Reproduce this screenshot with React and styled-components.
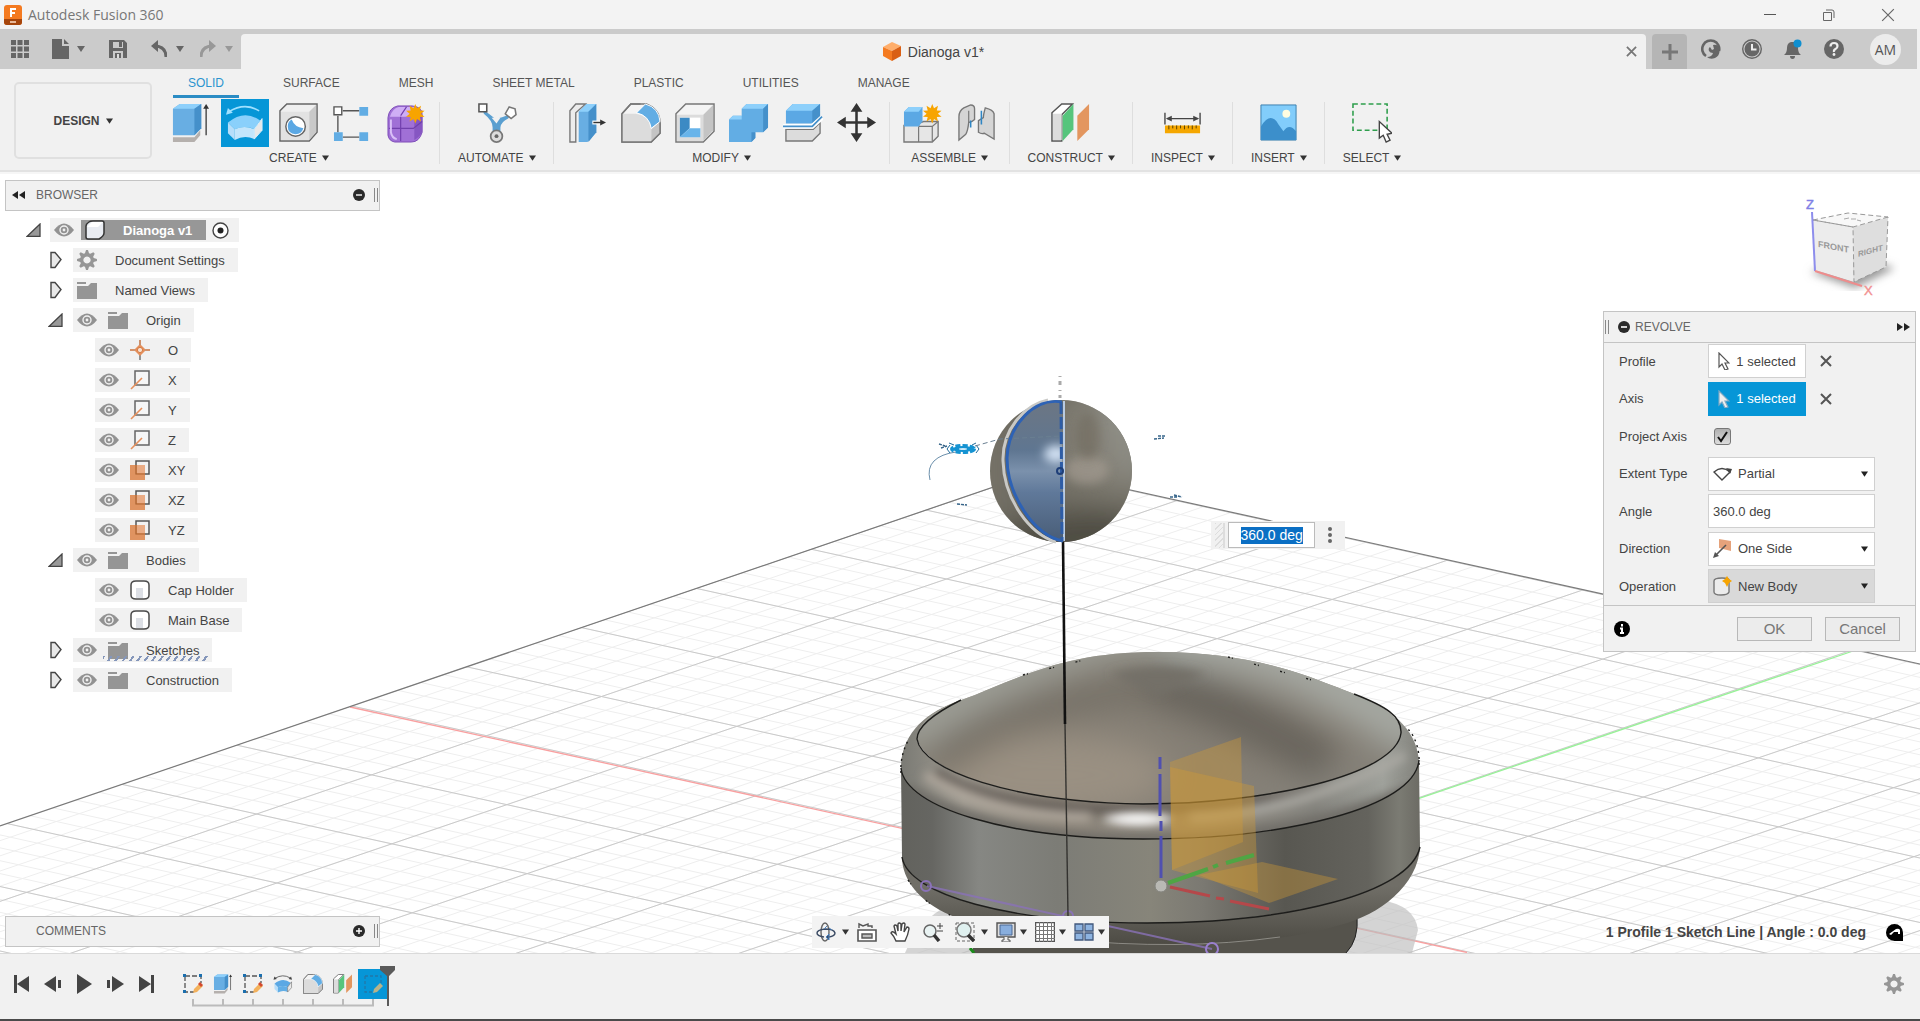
import React, { useState } from 'react';
import styled, { createGlobalStyle } from 'styled-components';

const GlobalStyle = createGlobalStyle`
  * {
    box-sizing: border-box;
  }
  body {
    margin: 0;
    background: #f1f1f1;
    color: #444;
    font-family: "Liberation Sans", Arial, sans-serif;
    font-size: 13px;
  }
  button, input, select {
    font: inherit;
    color: inherit;
  }
  svg {
    display: block;
    flex: none;
  }
`;

const Page = styled.div`
  display: flex;
  flex-direction: column;
  min-height: 100vh;
  border-bottom: 2px solid #4a4a4a;
`;

const PlainButton = styled.button`
  display: flex;
  align-items: center;
  justify-content: center;
  padding: 0;
  border: none;
  background: none;
  cursor: pointer;
`;

/* ---------- title bar ---------- */

const TitleBar = styled.header`
  display: flex;
  align-items: center;
  height: 29px;
  padding: 0 20px 0 4px;
  background: #f3f3f3;
`;

const AppTitle = styled.h1`
  margin: 0 auto 0 6px;
  font: 400 14px "Open Sans", sans-serif;
  color: #777;
`;

const WindowButton = styled(PlainButton)`
  width: 24px;
  height: 24px;
  margin-left: 35px;
`;

/* ---------- document bar ---------- */

const DocumentBar = styled.div`
  display: flex;
  height: 40px;
  margin-right: 3px;
  background: #cbcbcb;
`;

const QuickTools = styled.div`
  display: flex;
  align-items: center;
  width: 241px;
  padding-left: 11px;
`;

const QuickButton = styled(PlainButton)`
  gap: ${({ $gap }) => $gap || 0}px;
  margin-right: ${({ $after }) => $after || 0}px;
  opacity: ${({ $dim }) => ($dim ? 0.5 : 1)};
`;

const DocumentTab = styled.div`
  display: flex;
  flex: 1;
  align-items: center;
  margin-top: 5px;
  padding-right: 9px;
  border-radius: 4px 4px 0 0;
  background: #f1f1f1;
`;

const DocumentName = styled.div`
  display: flex;
  flex: 1;
  align-items: center;
  justify-content: center;
  gap: 7px;
  font-size: 14px;
`;

const AddTab = styled(PlainButton)`
  width: 35px;
  margin: 5px 14px 0 6px;
  border-radius: 4px 4px 0 0;
  background: #b5b5b5;
`;

const AccountTools = styled.div`
  display: flex;
  align-items: center;
  gap: 21px;
  padding-right: 16px;
`;

const Avatar = styled(PlainButton)`
  width: 31px;
  height: 31px;
  margin-left: 5px;
  border-radius: 50%;
  background: #ececec;
  color: #555;
  font: 400 14px "Open Sans", sans-serif;
`;

/* ---------- ribbon ---------- */

const Ribbon = styled.div`
  position: relative;
  z-index: 1;
  display: flex;
  height: 103px;
  border-bottom: 2px solid #e2e2e2;
  background: #f1f1f1;
  box-shadow: 0 2px #f6f6f6;
`;

const DesignButton = styled(PlainButton)`
  gap: 6px;
  width: 138px;
  height: 77px;
  margin: 13px 6px 0 14px;
  border: 2px solid #e0e0e0;
  border-radius: 5px;
  font-size: 12px;
  font-weight: bold;
`;

const RibbonBody = styled.div`
  flex: 1;
`;

const RibbonTabs = styled.nav`
  display: flex;
  gap: 29px;
  height: 29px;
  padding-left: 15px;
`;

const RibbonTab = styled.a`
  padding: 7px 15px 0;
  border-bottom: 3px solid ${({ $active }) => ($active ? '#2b8cc4' : 'transparent')};
  color: ${({ $active }) => ($active ? '#2b94cf' : '#555')};
  font-size: 12px;
  line-height: 14px;
  text-decoration: none;
`;

const RibbonGroups = styled.div`
  display: flex;
`;

const RibbonGroup = styled.section`
  display: flex;
  flex-direction: column;
  align-items: center;
  gap: 4px;
  padding: 0 ${({ $wide }) => ($wide ? 9 : 18)}px;
  background: linear-gradient(#dedede, #dedede) no-repeat right 4px / 1px 62px;

  &:last-child {
    background: none;
  }
`;

const ToolRow = styled.div`
  display: flex;
  gap: 6px;
  margin-top: 1px;
`;

const ToolButton = styled(PlainButton)`
  width: 48px;
  height: 48px;
  background: ${({ $active }) => ($active ? '#0696d7' : 'none')};
`;

const GroupLabel = styled(PlainButton)`
  gap: 5px;
  font-size: 12px;
  line-height: 14px;
`;

/* ---------- viewport ---------- */

const Viewport = styled.main`
  position: relative;
  display: flex;
  flex: 1;
  flex-direction: column;
  justify-content: space-between;
  overflow: hidden;
  background: #fff;
`;

const SceneSvg = styled.svg`
  position: absolute;
  inset: 0;
  width: 100%;
  height: 100%;
`;

const ViewportTop = styled.div`
  position: relative;
  display: flex;
  align-items: flex-start;
  justify-content: space-between;
  padding: 8px 4px 0 5px;
`;

const PanelHeader = styled.div`
  display: flex;
  align-items: center;
  width: ${({ $width }) => $width || 'auto'};
  height: 31px;
  padding: 0 0 1px 6px;
  border: 1px solid #c4c4c4;
  background: #f1f1f1;
`;

const PanelTitle = styled.h2`
  flex: 1;
  margin: 0 0 0 ${({ $indent }) => $indent || 0}px;
  color: #666;
  font-size: 12px;
  font-weight: normal;
`;

const Grip = styled.span`
  width: 4px;
  height: 14px;
  margin: 0 1px 0 ${({ $before }) => $before || 0}px;
  border: solid #888;
  border-width: 0 1px;
`;

const Tree = styled.ul`
  display: flex;
  flex-direction: column;
  gap: 6px;
  margin: 7px 0 0;
  padding: 0;
  list-style: none;
`;

const indents = [21, 43, 65];

const TreeItem = styled.li`
  display: flex;
  align-items: center;
  height: 24px;
  padding-left: ${({ $level }) => indents[$level]}px;
`;

const Expander = styled(PlainButton)`
  width: 15px;
  height: 18px;
  margin-right: ${({ $open }) => ($open ? 9 : 10)}px;
`;

const ExpanderSpace = styled.span`
  width: 25px;
`;

const TreeChip = styled.div`
  position: relative;
  display: flex;
  align-items: center;
  height: 24px;
  padding: 0 ${({ $root }) => ($root ? 10 : 13)}px 0 4px;
  background: #f1f1f1;
`;

const TreeIcon = styled.span`
  display: flex;
  margin-left: ${({ $first }) => ($first ? 0 : 11)}px;
`;

const TreeText = styled.span`
  padding-left: 18px;
`;

const Hatch = styled.span`
  position: absolute;
  right: 3px;
  bottom: 1px;
  left: 30px;
  height: 5px;
  background: repeating-linear-gradient(125deg, #8496ba 0 2px, transparent 2px 6px);
`;

const RootName = styled.div`
  display: flex;
  align-items: center;
  height: 20px;
  margin: 0 6px 0 7px;
  padding: 0 14px 0 4px;
  background: #979797;
  color: #fff;
  font-weight: bold;
`;

/* ---------- right side ---------- */

const RightColumn = styled.div`
  display: flex;
  flex-direction: column;
  align-items: flex-end;
  width: 313px;
`;

const CubeButton = styled(PlainButton)`
  height: 131px;
  margin-right: 16px;
`;

const Dialog = styled.form`
  width: 100%;
  border: 1px solid #c4c4c4;
  background: #f1f1f1;
`;

const DialogHeader = styled.div`
  display: flex;
  align-items: center;
  height: 31px;
  padding: 0 5px 0 1px;
  border-bottom: 1px solid #c4c4c4;
`;

const DialogRows = styled.div`
  display: flex;
  flex-direction: column;
  justify-content: space-between;
  height: 262px;
  padding: 1px 0 2px;
`;

const DialogRow = styled.div`
  display: flex;
  align-items: center;
  height: 34px;
  padding-left: 15px;
`;

const FieldLabel = styled.label`
  width: 89px;
`;

const SelectionButton = styled(PlainButton)`
  gap: 6px;
  width: 98px;
  height: 34px;
  border: 1px solid ${({ $active }) => ($active ? '#0696d7' : '#d0d0d0')};
  background: ${({ $active }) => ($active ? '#0696d7' : '#fff')};
  color: ${({ $active }) => ($active ? '#fff' : '#444')};
`;

const ClearButton = styled(PlainButton)`
  margin-left: 14px;
`;

const Field = styled.div`
  display: flex;
  align-items: center;
  width: 167px;
  height: 34px;
  padding: 0 6px 0 4px;
  border: 1px solid #d0d0d0;
  background: ${({ $grey }) => ($grey ? '#d9d9d9' : '#fff')};
`;

const FieldSelect = styled.select`
  flex: 1;
  min-width: 0;
  margin-left: 6px;
  padding: 0;
  border: none;
  appearance: none;
  background: none;
`;

const FieldInput = styled.input`
  width: 100%;
  padding: 0;
  border: none;
  background: none;
`;

const CheckBoxWrap = styled.span`
  display: grid;
  margin-left: 6px;

  & > * {
    grid-area: 1 / 1;
    margin: 0;
    pointer-events: none;
  }
  & > input {
    width: 17px;
    height: 17px;
    border: 1px solid #777;
    border-radius: 3px;
    appearance: none;
    background: linear-gradient(#b0b0b0, #dcdcdc);
    pointer-events: auto;
  }
`;

const DialogFooter = styled.div`
  display: flex;
  align-items: center;
  height: 46px;
  padding: 0 15px 0 10px;
  border-top: 1px solid #c4c4c4;
`;

const FooterButton = styled(PlainButton)`
  width: 75px;
  height: 24px;
  margin-left: ${({ $push }) => ($push ? 'auto' : '13px')};
  border: 1px solid #b8b8b8;
  background: #ececec;
  color: #777;
  font-size: 15px;
`;

/* floats next to the revolve manipulator */
const AngleBox = styled.div`
  position: absolute;
  top: 349px;
  left: calc(50% + 251px);
  display: flex;
  align-items: center;
  width: 134px;
  height: 28px;
  background: #f1f1f1;
`;

const AngleGrip = styled.span`
  width: 10px;
  height: 25px;
  margin: 0 3px 0 4px;
  border-right: 2px solid #ddd;
  background: repeating-linear-gradient(135deg, #ddd 0 1px, transparent 1px 4px);
`;

const AngleFrame = styled.div`
  display: flex;
  align-items: center;
  justify-content: center;
  width: 87px;
  height: 26px;
  border: 1px solid #bbb;
  background: #fff;
`;

const AngleInput = styled.input`
  width: 62px;
  height: 17px;
  padding: 0;
  border: none;
  background: #0b6fc4;
  color: #fff;
  font-size: 14px;
`;

const MoreButton = styled(PlainButton)`
  flex: 1;
  height: 26px;
`;

/* ---------- viewport footer ---------- */

const ViewportBottom = styled.div`
  position: relative;
  display: grid;
  grid-template-columns: 1fr auto 1fr;
  align-items: start;
  padding: 0 5px 5px;
`;

const NavBar = styled.div`
  display: flex;
  align-items: center;
  gap: 8px;
  height: 32px;
  padding: 0 4px;
  background: #f3f3f3;
`;

const NavButton = styled(PlainButton)`
  gap: ${({ $tight }) => ($tight ? 4 : 6)}px;
  margin-right: ${({ $after }) => $after || 0}px;
`;

const Status = styled.p`
  display: flex;
  align-items: center;
  align-self: center;
  justify-content: flex-end;
  gap: 20px;
  margin: 0;
  padding-right: 12px;
  font-size: 14px;
  font-weight: bold;
`;

/* ---------- timeline ---------- */

const Timeline = styled.footer`
  display: flex;
  align-items: flex-start;
  height: 66px;
  padding: 15px 16px 0 13px;
  border-top: 1px solid #dadada;
  background: #f1f1f1;
`;

const PlayControls = styled.div`
  display: flex;
  gap: 13px;
  width: 165px;
  height: 30px;
`;

const Features = styled.div`
  position: relative;
`;

const FeatureRow = styled.div`
  display: flex;
`;

const FeatureButton = styled(PlainButton)`
  width: 30px;
  height: 30px;
  background: ${({ $active }) => ($active ? '#0696d7' : 'none')};
`;

const Marker = styled.svg`
  position: absolute;
  top: -3px;
  right: -7px;
`;

const SettingsButton = styled(PlainButton)`
  height: 30px;
  margin-left: auto;
`;

/* ---------- icons ---------- */

const Icon = ({ w, h, box, children }) => (
  <svg width={w} height={h || w} viewBox={box || `0 0 ${w} ${h || w}`} fill="none" aria-hidden="true">
    {children}
  </svg>
);

const Caret = ({ color = '#333', w = 7 }) => (
  <Icon w={w} h={6} box="0 0 8 6">
    <path d="M0 0h8L4 6z" fill={color} />
  </Icon>
);

const Star = ({ x, y, r = 9 }) => {
  const points = [];
  for (let i = 0; i < 20; i += 1) {
    const radius = i % 2 ? r * 0.58 : r;
    const angle = (i * Math.PI) / 10;
    points.push(`${x + radius * Math.sin(angle)},${y - radius * Math.cos(angle)}`);
  }
  return <polygon points={points.join(' ')} fill="#f7a400" />;
};

const ExtrudeShape = () => (
  <>
    <path d="M2 35h22l6-7v5l-6 7H2z" fill="#b5b0ad" />
    <path d="M2 6l7-5h22v25l-7 7H2z" fill="#68aee3" />
    <path d="M2 6l7-5h22l-7 5z" fill="#8ed0fb" />
    <path d="M24 6l7-5v25l-7 7z" fill="#4590ca" />
    <path d="M36 33V4" stroke="#333" strokeWidth="1.3" />
    <path d="M33 6l3-5 3 5z" fill="#333" />
  </>
);

const RevolveShape = ({ arrow = '#9fe0ff', dark }) => (
  <>
    <path d="M3 20q17-14 33-2l-6 9q-9-5-20 0z" fill={dark ? '#5ba8e4' : '#8ad0fb'} />
    <path d="M3 20l7 7v11l-7-7z" fill="#b7defa" />
    <path d="M10 27q10-5 20 0v10q-10-5-20 1z" fill={dark ? '#62aee6' : '#c3e5fb'} />
    <path d="M30 27l8-11v12l-8 9z" fill="#e8e8e8" stroke={dark ? '#555' : '#d5eefc'} />
    <path d="M4 9Q20-1 35 8" stroke={arrow} strokeWidth="1.6" />
    <path d="M1 12l2-7 5 5z" fill={arrow} />
    {dark && <path d="M39 12l-2-7-5 5z" fill={arrow} />}
  </>
);

const FilletShape = () => (
  <>
    <path d="M1 11L10 1h16q13 5 14 18v12l-9 9H1z" fill="#f4f4f4" stroke="#777" strokeWidth="1.5" />
    <path d="M1 11h14q15 2 16 17v12H1z" fill="#dcdcdc" />
    <path d="M31 27l9-8v12l-9 9z" fill="#c4c4c4" />
    <path d="M16 10l9-9q14 4 15 18l-9 7Q29 13 16 10z" fill="#62ade4" stroke="#fff" strokeWidth="1" />
    <path d="M1 11L10 1h10M1 11v29h30l9-9V20" stroke="#777" strokeWidth="1.5" />
  </>
);

const ConstructShape = () => (
  <>
    <path d="M1 10L11 1h11L11 12v27H1z" fill="#fff" stroke="#555" strokeWidth="1.5" />
    <path d="M2 11h9v27H2z" fill="#dcdcdc" />
    <path d="M12 13L23 1v26L12 39z" fill="#56c57c" />
    <path d="M27 13L39 1v26L27 39z" fill="#e3965f" />
  </>
);

const toolShapes = {
  extrude: <ExtrudeShape />,
  revolve: <RevolveShape />,
  hole: (
    <>
      <path d="M1 8l7-7h31v29l-8 9H1z" fill="#efefef" stroke="#666" strokeWidth="1.5" />
      <path d="M2 9h29v29H2z" fill="#e2e2e2" />
      <path d="M31 9l7-7v28l-7 8z" fill="#c9c9c9" />
      <circle cx="17" cy="24" r="10" fill="#fff" stroke="#666" strokeWidth="1.5" />
      <path d="M13 17q3 8 12 9-2 6-8 6-8-1-8-8 0-5 4-7z" fill="#5ba8e4" />
    </>
  ),
  pattern: (
    <>
      <path d="M10 8h17M10 35h17M5 13v17" stroke="#555" strokeWidth="1.4" />
      <path d="M27 4h9v9h-9zM1 30h9v9H1zM27 30h9v9h-9z" fill="#62ade4" />
      <path d="M1 4h8v8H1z" fill="#fff" stroke="#555" strokeWidth="1.4" />
    </>
  ),
  form: (
    <>
      <path d="M1 15Q2 5 11 3h15q10 1 10 9v18q-3 10-11 10H8q-6-1-7-7z" fill="#a070d6" stroke="#7d4cb8" />
      <path d="M3 14Q5 6 12 4h15q4 1 1 6-3 4-10 4H5z" fill="#cfaef5" />
      <path d="M28 13q6-2 8-6v22q-2 6-8 9z" fill="#8656c2" />
      <path d="M14 14v25M2 26h25l9-7M14 13l6-9" stroke="#7140ad" strokeWidth="1.2" />
      <path d="M4 17v13q1 6 6 7" stroke="#d9bff7" strokeWidth="2" />
      <Star x={29} y={11} r={10} />
    </>
  ),
  automate: (
    <>
      <path d="M6 7q8 5 12 9 8 0 17-6l-3 6q-7 3-8 9v8h-8v-8q0-7-9-14z" fill="#5a9fd0" />
      <path d="M15 15h9l-4 6z" fill="#f1f1f1" />
      <path d="M2 1h8v8H2z" fill="#fff" stroke="#555" strokeWidth="1.6" />
      <path d="M33 4l6 2 1 6-5 4-6-5z" fill="#fff" stroke="#777" strokeWidth="1.6" />
      <circle cx="20" cy="34" r="6" fill="#ddd" stroke="#777" strokeWidth="1.8" />
      <circle cx="20" cy="34" r="2" fill="#666" />
    </>
  ),
  press: (
    <>
      <path d="M3 8l6-7h10L9 10v30H3z" fill="#ececec" stroke="#777" strokeWidth="1.4" />
      <path d="M12 9l8-8h10v29l-9 10h-9z" fill="#68aee3" />
      <path d="M12 9l8-8h10l-8 8z" fill="#8ed0fb" />
      <path d="M22 9l8-8v29l-8 10z" fill="#4590ca" />
      <path d="M26 20h10" stroke="#fff" strokeWidth="4" />
      <path d="M27 20h8" stroke="#333" strokeWidth="1.5" />
      <path d="M34 17l6 3-6 3z" fill="#333" />
    </>
  ),
  fillet: <FilletShape />,
  shell: (
    <>
      <path d="M1 11L11 1h29v28L29 40H1z" fill="#f4f4f4" stroke="#777" strokeWidth="1.5" />
      <path d="M2 12h27v27H2z" fill="#dcdcdc" />
      <path d="M29 12L39 2v26L29 39z" fill="#c4c4c4" />
      <path d="M5 15h21v20H5z" fill="#fff" />
      <path d="M5 15l10 0v11L5 35z" fill="#3c8ac4" />
      <path d="M15 26h11v9H5z" fill="#68b4ea" />
    </>
  ),
  combine: (
    <>
      <path d="M0 17l4-4h9V6l5-5h22v24l-5 5h-8v6l-4 4H0z" fill="#62ade4" />
      <path d="M13 6l5-5h22l-5 5zM0 17l4-4h9v4z" fill="#8ed0fb" />
      <path d="M35 6l5-5v24l-5 5zM23 30h4v6l-4 4z" fill="#4590ca" />
    </>
  ),
  split: (
    <>
      <path d="M3 8l7-7h28v13l-8 7H3z" fill="#5ba8e4" />
      <path d="M3 8l7-7h28l-8 7z" fill="#8ed0fb" />
      <path d="M30 8l8-7v13l-8 7z" fill="#4590ca" />
      <path d="M3 27h28l7-7v11l-8 8H3z" fill="#dcdcdc" stroke="#777" strokeWidth="1.4" />
      <path d="M0 24h30l10-9" stroke="#fff" strokeWidth="5" />
      <path d="M0 24h30l10-10" stroke="#4590ca" strokeWidth="1.8" />
    </>
  ),
  move: (
    <>
      <path d="M20 6v28M6 20h28" stroke="#333" strokeWidth="2.6" />
      <path d="M20 0l6 9H14zM20 40l6-9H14zM0 20l9-6v12zM40 20l-9-6v12z" fill="#333" />
    </>
  ),
  component: (
    <>
      <path d="M1 23h15V21l5-2h15v15l-6 6H1z" fill="#e6e6e6" stroke="#777" strokeWidth="1.4" />
      <path d="M16 24v16M16 24h14l6-5M30 24v15" stroke="#777" strokeWidth="1.2" />
      <path d="M1 9l5-5h14v15l-4 5H1z" fill="#5ba8e4" />
      <path d="M1 9l5-5h14l-4 5z" fill="#8ed0fb" />
      <Star x={30} y={11} r={10} />
    </>
  ),
  joint: (
    <>
      <path d="M2 38V14q0-6 5-9l7-3q4 0 4 4v11q-3 3-6 3-1 9-3 12z" fill="#d5d5d5" stroke="#777" strokeWidth="1.4" />
      <path d="M12 20V8" stroke="#777" strokeWidth="1.2" />
      <path d="M38 37V11q-1-4-9-6-2 7-2 10l-5 3v12q3 2 6 1z" fill="#d5d5d5" stroke="#777" strokeWidth="1.4" />
      <path d="M14 18v7M25 8v14" stroke="#2f86c4" strokeWidth="1.6" />
    </>
  ),
  construct: <ConstructShape />,
  inspect: (
    <>
      <path d="M2 10v12M38 10v12M4 16h32" stroke="#444" strokeWidth="1.4" />
      <path d="M3 16l6-3v6zM37 16l-6-3v6z" fill="#444" />
      <path d="M2 23h36v8H2z" fill="#f5a700" />
      <path d="M6 23v4M10 23v3M14 23v4M18 23v3M22 23v4M26 23v3M30 23v4M34 23v3" stroke="#5a4100" />
    </>
  ),
  insert: (
    <>
      <path d="M2 2h36v36H2z" fill="#82cdfb" stroke="#3c7fae" />
      <path d="M2 38V24Q12 8 20 22l5 7q6-9 13 0v9z" fill="#3c8fcb" />
      <circle cx="28" cy="11" r="4" fill="#fffde0" />
    </>
  ),
  select: (
    <>
      <path d="M1 1h35v27H1z" stroke="#2e9e4c" strokeWidth="1.6" strokeDasharray="5 3" />
      <path d="M28 19v17l4-3 3 7 4-2-3-6 5-1z" fill="#fff" stroke="#444" strokeWidth="1.4" />
    </>
  ),
};

const gearPath = () => {
  const pts = [];
  for (let i = 0; i < 32; i += 1) {
    const r = i % 4 < 2 ? 10 : 7;
    const a = ((i - 0.5) * Math.PI) / 16;
    pts.push(`${10 + r * Math.sin(a)} ${10 - r * Math.cos(a)}`);
  }
  return `M${pts.join('L')}ZM10 6.4a3.6 3.6 0 1 0 .01 0z`;
};

const Gear = () => (
  <Icon w={20}>
    <path d={gearPath()} fill="#969696" fillRule="evenodd" />
  </Icon>
);

const Eye = () => (
  <Icon w={20} h={14}>
    <path d="M0 7Q10-6 20 7 10 20 0 7z" fill="#929292" />
    <circle cx="10" cy="7" r="4" stroke="#f1f1f1" strokeWidth="1.4" />
    <circle cx="10" cy="7" r="1.4" fill="#f1f1f1" />
  </Icon>
);

const treeIcons = {
  gear: <Gear />,
  folder: (
    <Icon w={20} h={18}>
      <path d="M0 1h9v2H0zM0 5h11l3-3h6v16H0z" fill="#959595" />
    </Icon>
  ),
  origin: (
    <Icon w={20}>
      <path d="M10 0v5M10 15v5M0 10h5M15 10h5" stroke="#555" strokeWidth="1.2" />
      <path d="M10 4l6 6-6 6-6-6z" fill="#e58f5b" />
      <path d="M10 0v4M0 10h4M16 10h4" stroke="#e58f5b" strokeWidth="1.4" />
      <circle cx="10" cy="10" r="2.6" fill="#f6e2d5" stroke="#d77b42" />
    </Icon>
  ),
  axis: (
    <Icon w={20}>
      <path d="M5 1h14v14H5z" fill="#f6f6f6" stroke="#666" strokeWidth="1.5" />
      <path d="M1 19L12 8" stroke="#e58f5b" strokeWidth="1.6" />
    </Icon>
  ),
  plane: (
    <Icon w={20}>
      <path d="M6 1h13v13H6z" stroke="#555" strokeWidth="1.5" />
      <path d="M0 5h15v15H0z" fill="#e09360" />
      <path d="M7 5h8v8H7z" fill="#e9ab84" />
      <path d="M6 5v9h9" stroke="#a9622f" strokeWidth="1.2" />
    </Icon>
  ),
  body: (
    <Icon w={20}>
      <path d="M1 5q0-4 5-4h8q5 0 5 4v10q0 4-5 4H6q-5 0-5-4z" fill="#fff" stroke="#4a4a4a" strokeWidth="1.5" />
      <path d="M6 8h7v10H6z" fill="#dcdfe5" />
    </Icon>
  ),
};

const Cursor = ({ fill = '#fff', stroke = '#555' }) => (
  <Icon w={12} h={18}>
    <path d="M1 1v14l3-3 3 6 3-1-3-6h4z" fill={fill} stroke={stroke} strokeWidth="1.2" />
  </Icon>
);

const Cross = ({ size = 12, width = 2, color = '#555' }) => (
  <Icon w={size} box="0 0 12 12">
    <path d="M1 1l10 10M11 1L1 11" stroke={color} strokeWidth={width} />
  </Icon>
);

const RoundSign = ({ plus }) => (
  <Icon w={12}>
    <circle cx="6" cy="6" r="6" fill="#2a2a2a" />
    <path d={plus ? 'M3 6h6M6 3v6' : 'M3 6h6'} stroke="#fff" strokeWidth="1.4" />
  </Icon>
);

const DoubleArrow = ({ left }) => (
  <Icon w={13} h={8}>
    <path d={left ? 'M6 0v8L0 4zM13 0v8L7 4z' : 'M0 0v8l6-4zM7 0v8l6-4z'} fill="#222" />
  </Icon>
);

const SketchIcon = ({ faint }) => (
  <Icon w={20}>
    <path d="M2 2h16v7M2 2v16h9" stroke={faint ? '#2377a8' : '#555'} strokeWidth="1.3" strokeDasharray={faint ? '3 2' : '5 2'} />
    {!faint && <path d="M0 0h3v3H0zM16 0h3v3h-3zM0 16h3v3H0z" fill="#1b6fae" />}
    <path d="M10 19l1-4 6-6 3 3-6 6z" fill={faint ? '#b7b38a' : '#f3b15c'} />
    {!faint && <path d="M15 10l2-2 3 3-2 2z" fill="#d2492e" />}
  </Icon>
);

/* ---------- 3D scene ---------- */

const range = (n) => Array.from({ length: n }, (_, i) => i);

// both line families are nearly parallel, so they are plain y = a + kx
const alongX = (offset) => `M0 ${offset - 308}L1920 ${offset + 115}`;
const alongY = (offset) => `M0 ${offset + 477}L1920 ${offset - 177}`;

const dome =
  'M917 737C920 715 945 706 975 695C1035 670 1075 652 1158 652C1235 652 1290 668 1331 685C1368 699 1401 712 1401 733C1396 775 1265 804 1143 804C1010 802 922 770 917 737Z';
const shoulder =
  'M901 770C900 735 925 712 961 700C925 718 917 730 917 739C922 770 1010 802 1143 804C1265 804 1396 775 1401 733C1402 716 1385 706 1354 694C1398 710 1418 735 1419 762C1415 808 1285 839 1143 839C1010 839 905 808 901 770Z';
const wall =
  'M901 768C905 808 1010 839 1143 839C1285 839 1415 808 1419 760L1420 847C1410 893 1290 923 1147 923C1010 923 908 895 902 857Z';
const underside =
  'M902 857C908 895 1010 923 1147 923C1290 923 1410 893 1420 847C1418 885 1380 915 1340 925C1290 940 1230 945 1150 945C1060 943 985 930 950 915C920 902 902 880 902 857Z';

const Scene = () => (
  <SceneSvg viewBox="0 172 1920 781" preserveAspectRatio="xMidYMid slice" aria-hidden="true">
    <defs>
      <clipPath id="floor">
        <path d="M1042 470L1920 664V960H0V826z" />
      </clipPath>
      <clipPath id="domeClip">
        <path d={dome} />
      </clipPath>
      <clipPath id="shoulderClip">
        <path d={shoulder} />
      </clipPath>
      <clipPath id="ballClip">
        <circle cx="1061" cy="471" r="71" />
      </clipPath>
      <clipPath id="profileClip">
        <path d="M1062 402C1035 397 1006 425 1006 458C1006 495 1035 537 1063 541z" />
      </clipPath>
      <filter id="soft" x="-50%" y="-50%" width="200%" height="200%">
        <feGaussianBlur stdDeviation="16" />
      </filter>
      <filter id="softer" x="-50%" y="-100%" width="200%" height="300%">
        <feGaussianBlur stdDeviation="5" />
      </filter>
      <linearGradient id="wallFill">
        <stop offset="0" stopColor="#62625d" />
        <stop offset=".06" stopColor="#666662" />
        <stop offset=".15" stopColor="#868783" />
        <stop offset=".3" stopColor="#7c7c76" />
        <stop offset=".48" stopColor="#87857a" />
        <stop offset=".58" stopColor="#7b7972" />
        <stop offset=".74" stopColor="#585751" />
        <stop offset=".9" stopColor="#64635d" />
        <stop offset=".96" stopColor="#7b7b73" />
        <stop offset="1" stopColor="#6c6b64" />
      </linearGradient>
      <linearGradient id="shoulderFill">
        <stop offset="0" stopColor="#7a7a74" />
        <stop offset=".12" stopColor="#a19c92" />
        <stop offset=".3" stopColor="#8b8479" />
        <stop offset=".6" stopColor="#8a857c" />
        <stop offset=".8" stopColor="#84837d" />
        <stop offset=".93" stopColor="#9fa19b" />
        <stop offset="1" stopColor="#83837d" />
      </linearGradient>
      <linearGradient id="underFill" x1="0" y1="0" x2="0" y2="1">
        <stop offset="0.4" stopColor="#706e67" />
        <stop offset="1" stopColor="#4d4b44" />
      </linearGradient>
      <linearGradient id="profileFill" x1="0" y1="0" x2="0" y2="1">
        <stop offset="0" stopColor="#6c7683" />
        <stop offset=".35" stopColor="#5f7691" />
        <stop offset=".5" stopColor="#7b91ac" />
        <stop offset=".65" stopColor="#60799a" />
        <stop offset="1" stopColor="#495d77" />
      </linearGradient>
    </defs>

    <g clipPath="url(#floor)">
      <g stroke="#eeeeee">
        {range(60).map((i) => (
          <React.Fragment key={i}>
            <path d={alongX(549.5 + i * 12.9)} />
            <path d={alongY(348.5 + i * 15.18)} />
          </React.Fragment>
        ))}
      </g>
      <g stroke="#cacaca">
        {range(12).map((i) => (
          <React.Fragment key={i}>
            <path d={alongX(549.5 + i * 64.5)} />
            <path d={alongY(348.5 + i * 75.9)} />
          </React.Fragment>
        ))}
      </g>
      <path d="M350 707L1467 952.5" stroke="#f9a0a0" strokeWidth="1.3" />
      <path d="M1161 886L1856 650" stroke="#98f298" strokeWidth="1.3" />
    </g>
    <path d="M0 826L1042 470.500L1920 664" fill="none" stroke="#7a7a7a" strokeWidth="1.2" />

    {/* main body */}
    <path d="M905 953Q920 915 960 900H1380Q1415 905 1418 930L1412 953z" fill="#bdbdbd" opacity=".65" />
    <path d="M973 925V953H1346Q1359 940 1357 915z" fill="#55534c" />
    <path d="M1357 915Q1359 940 1346 953" fill="none" stroke="#222" />
    <path d={underside} fill="url(#underFill)" />
    <path d="M1060 939Q1180 951 1280 937" fill="none" stroke="#a5a49e" opacity=".7" />
    <path d={wall} fill="url(#wallFill)" />
    <path d={shoulder} fill="url(#shoulderFill)" />
    <g clipPath="url(#shoulderClip)">
      <g fill="none" filter="url(#softer)">
        <path d="M905 790Q1000 842 1143 842T1415 790" stroke="#6f6d67" strokeWidth="14" />
        <path d="M935 772Q1010 814 1143 809T1330 788" stroke="#5f5952" strokeWidth="9" />
        <path d="M925 775Q1000 818 1090 817" stroke="#b4aba0" strokeWidth="8" />
        <path d="M1190 818Q1300 812 1405 755" stroke="#aaa9a3" strokeWidth="9" />
      </g>
      <ellipse cx="1138" cy="819" rx="34" ry="5" fill="#fff" filter="url(#softer)" />
      <ellipse cx="1138" cy="819" rx="22" ry="4" fill="#fff" opacity=".6" filter="url(#softer)" />
    </g>
    <path d={dome} fill="#857f75" />
    <g clipPath="url(#domeClip)">
      <g fill="none" filter="url(#soft)">
        <ellipse cx="1050" cy="775" rx="120" ry="40" fill="#9a9082" />
        <path d="M900 740Q955 695 1040 662T1158 636" stroke="#a3a69f" strokeWidth="30" />
        <path d="M1158 636Q1260 644 1330 682T1425 740" stroke="#a6a9a3" strokeWidth="50" />
        <path d="M935 768Q1010 705 1158 684" stroke="#736e65" strokeWidth="26" />
        <path d="M1150 680Q1230 705 1330 765" stroke="#68645c" strokeWidth="44" />
        <path d="M1230 800Q1340 790 1395 745" stroke="#84837d" strokeWidth="12" />
      </g>
      <path d="M1110 674Q1158 662 1206 674L1158 696z" fill="#736f67" filter="url(#softer)" />
    </g>
    <g fill="none" stroke="#1d1d1b" strokeWidth="1.4">
      <path d="M961 700C925 718 917 730 917 739C922 770 1010 802 1143 804C1265 804 1396 775 1401 733C1402 716 1385 706 1354 694" />
      <path d="M901 768C905 808 1010 839 1143 839C1285 839 1415 808 1419 760" />
      <path d="M902 857C908 895 1010 923 1147 923C1290 923 1410 893 1420 847" />
      <path d="M901 773C900 760 904 748 908 741M1419 765C1420 750 1415 736 1408 729" strokeDasharray="2 4" />
      <path d="M1023 675L1092 658M1228 657L1330 685M908 880Q925 905 950 915" strokeDasharray="2 2 1 22" />
    </g>

    {/* origin planes and axes */}
    <g fill="#d39a35" fillOpacity=".38">
      <path d="M1170 762L1241 737L1243 842L1172 870z" />
      <path d="M1170 767L1254 786L1258 893L1172 870z" />
      <path d="M1199 875L1262 862L1338 879L1269 903z" />
    </g>
    <g fill="none" strokeWidth="3">
      <path d="M1160 757v12M1160 774v42M1161 821v10M1161 836V878" stroke="#5050b0" />
      <path d="M1168 883L1208 869M1213 867L1218 865M1226 863L1254 855" stroke="#4fa544" strokeWidth="4" />
      <path d="M1170 887L1210 896M1216 898L1224 899M1230 901L1269 909" stroke="#b5484a" />
    </g>
    <circle cx="1161" cy="886" r="6" fill="#b9b9b4" stroke="#85857f" />

    {/* sketch profile lines */}
    <g fill="none" stroke="#8a72b8" strokeWidth="2">
      <path d="M927 886L1212 949" opacity=".8" />
      <circle cx="926" cy="886" r="5" />
      <circle cx="1068" cy="916" r="5" />
      <circle cx="1212" cy="949" r="6" stroke="#9b80d0" />
    </g>
    <path d="M970 948l4 5" stroke="#1b8a1b" strokeWidth="3" />
    <path d="M1063 541L1065 724" stroke="#111" strokeWidth="2.6" />
    <path d="M1065 724L1068 916" stroke="#33322f" strokeWidth="1.4" />

    {/* manipulator ring */}
    <g fill="none" stroke="#37658a">
      <path d="M930 480Q927 468 934 461T956 452" stroke="#6b8fab" />
      <path d="M939 444l6 2M941 448l6-2M1154 439l10-1M1158 436l8 0M1170 497l8 0M1174 495l8 2M957 504l10 1" strokeWidth="1.4" strokeDasharray="3 1" />
    </g>
    <ellipse cx="963" cy="449" rx="11" ry="3" fill="#1593d2" stroke="#1593d2" strokeWidth="4" strokeDasharray="5 2" />
    <ellipse cx="963" cy="449" rx="4" ry="1" fill="#cdeafa" />
    <path d="M950 445l-3 4 3 4M976 445l3 4-3 4M954 445l-5-2M972 445l4-2" fill="none" stroke="#1f6a99" />

    {/* revolved ball */}
    <circle cx="1061" cy="471" r="71" fill="#6f6c62" />
    <g clipPath="url(#ballClip)">
      <g filter="url(#soft)">
        <path d="M985 540Q1061 500 1140 520V560H985z" fill="#4b483f" />
        <path d="M1063 400L1150 395V495Q1100 488 1063 480z" fill="#858278" />
        <path d="M1100 395q35 40 40 80" fill="none" stroke="#999b95" strokeWidth="16" />
        <path d="M985 430v80" stroke="#858074" strokeWidth="10" />
      </g>
      <ellipse cx="1087" cy="470" rx="22" ry="14" fill="#a79f94" opacity=".6" filter="url(#softer)" />
      <ellipse cx="1088" cy="436" rx="12" ry="24" fill="#6b6457" opacity=".45" filter="url(#softer)" />
    </g>
    <path d="M1048 400C1024 405 1002 430 1003 461C1004 500 1030 534 1056 542" fill="none" stroke="#c9c9c6" strokeWidth="3" />
    <path d="M1062 402C1035 397 1006 425 1006 458C1006 495 1035 537 1063 541z" fill="url(#profileFill)" />
    <g clipPath="url(#profileClip)">
      <ellipse cx="1056" cy="454" rx="12" ry="9" fill="#cfdef0" filter="url(#softer)" />
    </g>
    <path d="M975 446L1000 439L1062 436" fill="none" stroke="#6a7f91" strokeDasharray="5 3" />
    <path d="M1062 402C1035 397 1008 425 1007 458C1007 495 1035 537 1063 541" fill="none" stroke="#2d62b5" strokeWidth="3" />
    <path d="M1064 401V541" stroke="#b9cbe2" strokeWidth="2" />
    <path d="M1061 402L1062 541" stroke="#2d5ca6" strokeWidth="3" strokeDasharray="12 3" />
    <circle cx="1060" cy="471" r="3" fill="none" stroke="#1f3f78" strokeWidth="2" />
    <path d="M1060 376V398" stroke="#aaa" strokeWidth="3" strokeDasharray="1 4 4 5" />
  </SceneSvg>
);

const ViewCube = () => (
  <svg width="100" height="108" viewBox="1800 192 100 108" role="img" aria-label="View cube">
    <defs>
      <filter id="cubeShadow">
        <feGaussianBlur stdDeviation="4" />
      </filter>
    </defs>
    <path d="M1810 272L1855 288L1895 268L1860 258z" fill="#999" filter="url(#cubeShadow)" />
    <path d="M1813 220L1853 227L1854 282L1815 270z" fill="#ececec" />
    <path d="M1853 227L1888 217L1886 267L1854 282z" fill="#dedede" />
    <path d="M1813 220L1848 213L1888 217L1853 227z" fill="#f8f8f8" />
    <path d="M1813 220L1848 213L1888 217L1886 267L1854 282L1853 227zL1853 227L1888 217" fill="none" stroke="#999" strokeDasharray="5 3" />
    <path d="M1844 219l5-1M1851 219l5 0M1857 220l4 1" stroke="#aaa" />
    <text x="0" y="0" transform="matrix(1 .19 0 1 1818 247)" fontSize="9" fontWeight="bold" fill="#999">
      FRONT
    </text>
    <text x="0" y="0" transform="matrix(1 -.28 0 1 1858 257)" fontSize="8" fontWeight="bold" fill="#999">
      RIGHT
    </text>
    <path d="M1812 212L1815 271" stroke="#8d8dec" strokeWidth="2" />
    <path d="M1815 271L1862 286" stroke="#ee8c8c" strokeWidth="2" />
    <text x="1806" y="209" fontSize="13" fill="#7f7fe6" stroke="#7f7fe6" strokeWidth="0.4">Z</text>
    <text x="1864" y="295" fontSize="13" fill="#f28f8f" stroke="#f28f8f" strokeWidth="0.4">X</text>
  </svg>
);

/* ---------- data ---------- */

const ribbonTabs = ['SOLID', 'SURFACE', 'MESH', 'SHEET METAL', 'PLASTIC', 'UTILITIES', 'MANAGE'];

const ribbonGroups = [
  { label: 'CREATE', tools: ['extrude', 'revolve', 'hole', 'pattern', 'form'] },
  { label: 'AUTOMATE', tools: ['automate'] },
  { label: 'MODIFY', tools: ['press', 'fillet', 'shell', 'combine', 'split', 'move'] },
  { label: 'ASSEMBLE', tools: ['component', 'joint'] },
  { label: 'CONSTRUCT', tools: ['construct'] },
  { label: 'INSPECT', tools: ['inspect'] },
  { label: 'INSERT', tools: ['insert'] },
  { label: 'SELECT', tools: ['select'] },
];

const treeItems = [
  { name: 'Document Settings', level: 1, icon: 'gear', open: false, noEye: true },
  { name: 'Named Views', level: 1, icon: 'folder', open: false, noEye: true },
  { name: 'Origin', level: 1, icon: 'folder', open: true },
  { name: 'O', level: 2, icon: 'origin' },
  { name: 'X', level: 2, icon: 'axis' },
  { name: 'Y', level: 2, icon: 'axis' },
  { name: 'Z', level: 2, icon: 'axis' },
  { name: 'XY', level: 2, icon: 'plane' },
  { name: 'XZ', level: 2, icon: 'plane' },
  { name: 'YZ', level: 2, icon: 'plane' },
  { name: 'Bodies', level: 1, icon: 'folder', open: true },
  { name: 'Cap Holder', level: 2, icon: 'body' },
  { name: 'Main Base', level: 2, icon: 'body' },
  { name: 'Sketches', level: 1, icon: 'folder', open: false, hatched: true },
  { name: 'Construction', level: 1, icon: 'folder', open: false },
];

const fields = [
  {
    id: 'extent',
    label: 'Extent Type',
    value: 'Partial',
    icon: (
      <Icon w={19} h={14}>
        <path d="M1 5l8 8 8-8Q9-2 1 5z" stroke="#444" strokeWidth="1.4" />
        <path d="M13 1l6 1-2 5z" fill="#444" />
      </Icon>
    ),
  },
  { id: 'angle', label: 'Angle' },
  {
    id: 'direction',
    label: 'Direction',
    value: 'One Side',
    icon: (
      <Icon w={19} h={19}>
        <path d="M6 0l12 2v10L6 9z" fill="#e5a27b" />
        <path d="M13 6L3 16" stroke="#555" strokeWidth="1.6" />
        <path d="M0 19l2-6 4 4z" fill="#555" />
      </Icon>
    ),
  },
  {
    id: 'operation',
    label: 'Operation',
    value: 'New Body',
    grey: true,
    icon: (
      <Icon w={19} h={20}>
        <path d="M1 5q0-3 8-3t7 3v11q-1 3-8 3-7 0-7-3z" fill="#ececec" stroke="#777" strokeWidth="1.4" />
        <path d="M14 0l2 3 3 2-3 2-2 4-2-4-3-2 3-2z" fill="#f7a400" />
      </Icon>
    ),
  },
];

const OpenArrow = ({ open }) =>
  open ? (
    <Icon w={15} h={14}>
      <path d="M1 13.500L14 1v12.500z" fill="#999" stroke="#444" strokeWidth="1.3" />
    </Icon>
  ) : (
    <Icon w={15} h={18}>
      <path d="M3 1.500l4 0 6 7-6 8H3z" fill="#e8e8e8" stroke="#444" strokeWidth="1.4" />
    </Icon>
  );

function BrowserTree() {
  return (
    <Tree>
      <TreeItem $level={0}>
        <Expander $open aria-label="Collapse Dianoga v1">
          <OpenArrow open />
        </Expander>
        <TreeChip $root>
          <Eye />
          <RootName>
            <Icon w={20}>
              <path d="M1 6q0-2 3-4 1-1 4-1h9q2 0 2 2v10q0 3-5 6H3q-2 0-2-2z" fill="#e9ecf2" stroke="#333" strokeWidth="1.5" />
              <path d="M2 7h11l5-5H7z" fill="#fff" />
            </Icon>
            <TreeText>Dianoga v1</TreeText>
          </RootName>
          <Icon w={17}>
            <circle cx="8.5" cy="8.5" r="7.500" fill="#fff" stroke="#444" strokeWidth="1.4" />
            <circle cx="8.5" cy="8.5" r="3" fill="#222" />
          </Icon>
        </TreeChip>
      </TreeItem>
      {treeItems.map((item) => (
        <TreeItem key={item.name} $level={item.level}>
          {item.level === 1 ? (
            <Expander aria-label={`Toggle ${item.name}`}>
              <OpenArrow open={item.open} />
            </Expander>
          ) : (
            <ExpanderSpace />
          )}
          <TreeChip>
            {!item.noEye && <Eye />}
            <TreeIcon $first={item.noEye}>{treeIcons[item.icon]}</TreeIcon>
            <TreeText>{item.name}</TreeText>
            {item.hatched && <Hatch />}
          </TreeChip>
        </TreeItem>
      ))}
    </Tree>
  );
}

function RevolveDialog() {
  const [angle, setAngle] = useState('360.0 deg');
  const [projectAxis, setProjectAxis] = useState(true);

  return (
    <Dialog onSubmit={(e) => e.preventDefault()}>
      <DialogHeader>
        <Grip />
        <Icon w={20} h={12} box="-8 0 20 12">
          <circle cx="6" cy="6" r="6" fill="#2a2a2a" />
          <path d="M3 6h6" stroke="#fff" strokeWidth="1.6" />
        </Icon>
        <PanelTitle $indent={5}>REVOLVE</PanelTitle>
        <DoubleArrow />
      </DialogHeader>
      <DialogRows>
        <DialogRow>
          <FieldLabel htmlFor="profile">Profile</FieldLabel>
          <SelectionButton type="button" id="profile">
            <Cursor />1 selected
          </SelectionButton>
          <ClearButton type="button" aria-label="Clear profile">
            <Cross />
          </ClearButton>
        </DialogRow>
        <DialogRow>
          <FieldLabel htmlFor="axis">Axis</FieldLabel>
          <SelectionButton type="button" id="axis" $active>
            <Cursor stroke="#7ea9c4" fill="#eee" />1 selected
          </SelectionButton>
          <ClearButton type="button" aria-label="Clear axis">
            <Cross />
          </ClearButton>
        </DialogRow>
        <DialogRow>
          <FieldLabel htmlFor="projectAxis">Project Axis</FieldLabel>
          <CheckBoxWrap>
            <input
              id="projectAxis"
              type="checkbox"
              checked={projectAxis}
              onChange={(e) => setProjectAxis(e.target.checked)}
            />
            {projectAxis && (
              <Icon w={17}>
                <path d="M4 9l3 4 6-9" stroke="#111" strokeWidth="2" />
              </Icon>
            )}
          </CheckBoxWrap>
        </DialogRow>
        {fields.map((field) => (
          <DialogRow key={field.id}>
            <FieldLabel htmlFor={field.id}>{field.label}</FieldLabel>
            <Field $grey={field.grey}>
              {field.value ? (
                <>
                  {field.icon}
                  <FieldSelect id={field.id} defaultValue={field.value}>
                    <option>{field.value}</option>
                  </FieldSelect>
                  <Caret color="#222" />
                </>
              ) : (
                <FieldInput id={field.id} value={angle} onChange={(e) => setAngle(e.target.value)} />
              )}
            </Field>
          </DialogRow>
        ))}
      </DialogRows>
      <DialogFooter>
        <Icon w={16}>
          <circle cx="8" cy="8" r="8" fill="#000" />
          <path d="M8 3v2.500M6 7.500h2v4M6 12h4" stroke="#fff" strokeWidth="2" />
        </Icon>
        <FooterButton $push type="submit">OK</FooterButton>
        <FooterButton type="button">Cancel</FooterButton>
      </DialogFooter>
    </Dialog>
  );
}

function App() {
  return (
    <Page>
      <GlobalStyle />

      <TitleBar>
        <Icon w={18} h={20}>
          <path d="M0 3q0-3 3-3h12q3 0 3 3v14q0 3-3 3H3q-3 0-3-3z" fill="#f47a20" />
          <path d="M0 14h18v3q0 3-3 3H3q-3 0-3-3z" fill="#a6460d" />
          <path d="M7 12V4h5M7 8h4" stroke="#fff" strokeWidth="2" />
          <path d="M6 17h6" stroke="#ffe1c8" strokeWidth="1.5" />
        </Icon>
        <AppTitle>Autodesk Fusion 360</AppTitle>
        <WindowButton aria-label="Minimize">
          <Icon w={12}>
            <path d="M0 5.500h12" stroke="#555" />
          </Icon>
        </WindowButton>
        <WindowButton aria-label="Restore">
          <Icon w={12}>
            <path d="M.5 3.500h8v8h-8zM3 1h6q2 0 2 2v6" stroke="#666" />
          </Icon>
        </WindowButton>
        <WindowButton aria-label="Close">
          <Cross width={1} color="#666" size={14} />
        </WindowButton>
      </TitleBar>

      <DocumentBar>
        <QuickTools>
          <QuickButton aria-label="Data panel" $after={23}>
            <Icon w={18}>
              <path d="M0 0h5v5H0zM6.500 0h5v5h-5zM13 0h5v5h-5zM0 6.500h5v5H0zM6.500 6.500h5v5h-5zM13 6.500h5v5h-5zM0 13h5v5H0zM6.500 13h5v5h-5zM13 13h5v5h-5z" fill="#666" />
            </Icon>
          </QuickButton>
          <QuickButton aria-label="File" $gap={8} $after={24}>
            <Icon w={17} h={20}>
              <path d="M0 0h10v7h7v13H0zM12 0l5 5h-5z" fill="#666" />
            </Icon>
            <Caret w={8} color="#666" />
          </QuickButton>
          <QuickButton aria-label="Save" $after={24}>
            <Icon w={18}>
              <path d="M0 0h15l3 3v15H0zM4 2v6h10V2zM4 11v7h10v-7z" fill="#666" fillRule="evenodd" />
              <path d="M10 2h3v5h-3zM6 13h6v5H6z" fill="#666" />
              <path d="M8 14h2v4H8z" fill="#ddd" />
            </Icon>
          </QuickButton>
          <QuickButton aria-label="Undo" $gap={9} $after={16}>
            <Icon w={16} h={18}>
              <path d="M3 6q12 0 12 11" stroke="#666" strokeWidth="3" />
              <path d="M0 6l7-6v12z" fill="#666" />
            </Icon>
            <Caret w={8} color="#666" />
          </QuickButton>
          <QuickButton aria-label="Redo" $gap={9} $dim>
            <Icon w={16} h={18}>
              <path d="M13 6Q1 6 1 17" stroke="#666" strokeWidth="3" />
              <path d="M16 6L9 0v12z" fill="#666" />
            </Icon>
            <Caret w={8} color="#666" />
          </QuickButton>
        </QuickTools>
        <DocumentTab>
          <DocumentName>
            <Icon w={18} h={19}>
              <path d="M0 5l9-5 9 4-9 5z" fill="#ffae6b" />
              <path d="M0 5l9 4v10l-9-5z" fill="#f47a20" />
              <path d="M9 9l9-5v10l-9 5z" fill="#d95f14" />
            </Icon>
            Dianoga v1*
          </DocumentName>
          <PlainButton aria-label="Close tab">
            <Cross color="#777" size={11} />
          </PlainButton>
        </DocumentTab>
        <AddTab aria-label="New tab">
          <Icon w={16}>
            <path d="M0 8h16M8 0v16" stroke="#777" strokeWidth="3" />
          </Icon>
        </AddTab>
        <AccountTools>
          <PlainButton aria-label="Extensions">
            <Icon w={20}>
              <path d="M5 17A8.500 8.500 0 1 1 18 12" stroke="#666" strokeWidth="2.600" />
              <path d="M18 9q2 7-4 10-5 2-8-1 5 0 6-4-3 0-4-2-1-3 1-4l2 3 2-1-1-4q5-1 6 3z" fill="#666" />
            </Icon>
          </PlainButton>
          <PlainButton aria-label="Job status">
            <Icon w={20}>
              <circle cx="10" cy="10" r="9.300" stroke="#666" strokeWidth="1.4" />
              <circle cx="10" cy="10" r="7.500" fill="#666" />
              <path d="M10 5v5.500h4.500" stroke="#eee" strokeWidth="2" />
            </Icon>
          </PlainButton>
          <PlainButton aria-label="Notifications">
            <Icon w={20}>
              <path d="M1 16q3-2 3-7 0-5 4-6h3q4 1 4 6 0 5 3 7zM7 17h5q0 3-2.500 3T7 17z" fill="#666" />
              <circle cx="14.500" cy="4.500" r="4" fill="#0f8fd0" />
            </Icon>
          </PlainButton>
          <PlainButton aria-label="Help">
            <Icon w={20}>
              <circle cx="10" cy="10" r="10" fill="#666" />
              <path d="M6.500 7.500q0-3.500 3.500-3.500t3.500 3q0 2-2 3T10 13" stroke="#eee" strokeWidth="2.200" />
              <circle cx="10" cy="15.500" r="1.400" fill="#eee" />
            </Icon>
          </PlainButton>
          <Avatar>AM</Avatar>
        </AccountTools>
      </DocumentBar>

      <Ribbon>
        <DesignButton>
          DESIGN <Caret />
        </DesignButton>
        <RibbonBody>
          <RibbonTabs>
            {ribbonTabs.map((tab) => (
              <RibbonTab key={tab} href="#" $active={tab === 'SOLID'}>
                {tab}
              </RibbonTab>
            ))}
          </RibbonTabs>
          <RibbonGroups>
            {ribbonGroups.map((group) => (
              <RibbonGroup key={group.label} $wide={group.tools.length > 1}>
                <ToolRow>
                  {group.tools.map((tool) => (
                    <ToolButton key={tool} aria-label={tool} $active={tool === 'revolve'}>
                      <Icon w={40} h={40} box="0 0 41 41">
                        {toolShapes[tool]}
                      </Icon>
                    </ToolButton>
                  ))}
                </ToolRow>
                <GroupLabel>
                  {group.label} <Caret />
                </GroupLabel>
              </RibbonGroup>
            ))}
          </RibbonGroups>
        </RibbonBody>
      </Ribbon>

      <Viewport>
        <Scene />
        <ViewportTop>
          <section>
            <PanelHeader $width="375px">
              <DoubleArrow left />
              <PanelTitle $indent={11}>BROWSER</PanelTitle>
              <RoundSign />
              <Grip $before={9} />
            </PanelHeader>
            <BrowserTree />
          </section>
          <RightColumn>
            <CubeButton aria-label="View cube">
              <ViewCube />
            </CubeButton>
            <RevolveDialog />
          </RightColumn>
        </ViewportTop>

        <AngleBox>
          <AngleGrip />
          <AngleFrame>
            <AngleInput aria-label="Angle" defaultValue="360.0 deg" />
          </AngleFrame>
          <MoreButton aria-label="More">
            <Icon w={4} h={18}>
              <circle cx="2" cy="3" r="2" fill="#666" />
              <circle cx="2" cy="9" r="2" fill="#666" />
              <circle cx="2" cy="15" r="2" fill="#666" />
            </Icon>
          </MoreButton>
        </AngleBox>

        <ViewportBottom>
          <PanelHeader $width="375px">
            <PanelTitle $indent={24}>COMMENTS</PanelTitle>
            <RoundSign plus />
            <Grip $before={9} />
          </PanelHeader>
          <NavBar>
            <NavButton aria-label="Orbit">
              <Icon w={20}>
                <ellipse cx="9" cy="10" rx="4" ry="9" stroke="#666" strokeWidth="1.4" />
                <path d="M8 15q-7-1-7-4t8-4q9 0 10 4 0 3-6 4" stroke="#3a4a63" strokeWidth="1.4" />
                <path d="M13 12l-3 3 3 3zM8 7l3-3M13 6l3 2" fill="#3a4a63" stroke="#4b82c0" />
              </Icon>
              <Caret />
            </NavButton>
            <NavButton aria-label="Look at" $after={5}>
              <Icon w={20}>
                <path d="M1 8h18v11H1z" fill="#fff" stroke="#555" strokeWidth="1.6" />
                <path d="M5 12h10v4H5z" fill="#bbb" stroke="#555" strokeWidth="1.4" />
                <path d="M2 6V2l4 2 5-2v2l4 0v2" stroke="#555" strokeWidth="1.4" />
              </Icon>
            </NavButton>
            <NavButton aria-label="Pan" $after={5}>
              <Icon w={20}>
                <path d="M6 19q-2-5-5-8 1-3 5 1L4 4q1-2 3 0l1 5V2q1-2 3 0l0 7 1-7q2-2 3 0l-1 8 3-5q2 0 2 2-1 6-4 12z" fill="#fff" stroke="#444" strokeWidth="1.400" />
              </Icon>
            </NavButton>
            <NavButton aria-label="Zoom" $after={4}>
              <Icon w={20}>
                <circle cx="7" cy="9" r="6" fill="#e9f3f3" stroke="#666" strokeWidth="1.5" />
                <path d="M11 13l5 6" stroke="#333" strokeWidth="3.500" />
                <path d="M14 4h6M17 1v6M14 9h6" stroke="#444" />
              </Icon>
            </NavButton>
            <NavButton aria-label="Fit">
              <Icon w={20}>
                <path d="M1 1h18v18H1z" stroke="#666" strokeDasharray="3 2" />
                <circle cx="9" cy="8" r="7" fill="#dff0ef" stroke="#777" strokeWidth="1.500" />
                <path d="M13 13l6 6" stroke="#333" strokeWidth="3.500" />
              </Icon>
              <Caret />
            </NavButton>
            <NavButton aria-label="Display settings" $tight>
              <Icon w={20}>
                <path d="M1 1h18v14H1z" fill="#ddd" stroke="#555" strokeWidth="1.400" />
                <path d="M4 3h12v10H4z" fill="#88aede" stroke="#4a6894" />
                <path d="M8 15v3H6v2h8v-2h-2v-3" fill="#eee" stroke="#555" />
              </Icon>
              <Caret />
            </NavButton>
            <NavButton aria-label="Grid settings" $tight>
              <Icon w={20}>
                <path d="M.5.500h19v19H.5z" fill="#fff" stroke="#555" strokeWidth="1.500" />
                <path d="M4.500 0v20M8.500 0v20M12.500 0v20M16.500 0v20M0 4.500h20M0 8.500h20M0 12.500h20M0 16.500h20" stroke="#777" />
              </Icon>
              <Caret />
            </NavButton>
            <NavButton aria-label="Viewports" $tight>
              <Icon w={20} h={18}>
                <path d="M1 1h8v7H1zM11 1h8v7h-8zM1 10h8v7H1zM11 10h8v7h-8z" fill="#8db3e0" stroke="#41587c" strokeWidth="1.300" />
              </Icon>
              <Caret />
            </NavButton>
          </NavBar>
          <Status>
            1 Profile 1 Sketch Line | Angle : 0.0 deg
            <Icon w={17}>
              <path d="M8.500 0a8.500 8.500 0 0 1 8.500 8.500V17H8.500a8.500 8.500 0 0 1 0-17z" fill="#000" />
              <path d="M3 10l7-5q3-1 4 1v4h-2V8L8 8l-3 3z" fill="#fff" />
            </Icon>
          </Status>
        </ViewportBottom>
      </Viewport>

      <Timeline>
        <PlayControls>
          <PlainButton aria-label="Go to start">
            <Icon w={18}>
              <path d="M1 0h3v18H1zM16 1v16L4 9z" fill="#444" />
            </Icon>
          </PlainButton>
          <PlainButton aria-label="Step back">
            <Icon w={18}>
              <path d="M12 1v16L0 9zM14 5h3v8h-3z" fill="#444" />
            </Icon>
          </PlainButton>
          <PlainButton aria-label="Play">
            <Icon w={18} h={20}>
              <path d="M2 0l15 10L2 20z" fill="#444" />
            </Icon>
          </PlainButton>
          <PlainButton aria-label="Step forward">
            <Icon w={18}>
              <path d="M6 1v16l12-8zM1 5h3v8H1z" fill="#444" />
            </Icon>
          </PlainButton>
          <PlainButton aria-label="Go to end">
            <Icon w={18}>
              <path d="M14 0h3v18h-3zM2 1v16l12-8z" fill="#444" />
            </Icon>
          </PlainButton>
        </PlayControls>
        <Features>
          <FeatureRow>
            <FeatureButton aria-label="Sketch 1">
              <SketchIcon />
            </FeatureButton>
            <FeatureButton aria-label="Extrude 1">
              <Icon w={20} box="0 0 41 41"><ExtrudeShape /></Icon>
            </FeatureButton>
            <FeatureButton aria-label="Sketch 2">
              <SketchIcon />
            </FeatureButton>
            <FeatureButton aria-label="Revolve 1">
              <Icon w={20} box="0 0 41 41"><RevolveShape arrow="#444" dark /></Icon>
            </FeatureButton>
            <FeatureButton aria-label="Fillet 1">
              <Icon w={20} box="0 0 41 41"><FilletShape /></Icon>
            </FeatureButton>
            <FeatureButton aria-label="Plane 1">
              <Icon w={20} box="0 0 41 41"><ConstructShape /></Icon>
            </FeatureButton>
            <FeatureButton aria-label="Sketch 3" $active>
              <SketchIcon faint />
            </FeatureButton>
          </FeatureRow>
          <Icon w={210} h={8}>
            <path d="M15 0v6.500h180V0M45 0v6M75 0v6M105 0v6M135 0v6M165 0v6" stroke="#bbb" strokeWidth="2" />
          </Icon>
          <Marker width="15" height="40" viewBox="0 0 15 40" fill="none">
            <path d="M0 0h15v4l-6 6v30H7V10L0 4z" fill="#5a5a5a" />
          </Marker>
        </Features>
        <SettingsButton aria-label="Timeline settings">
          <Gear />
        </SettingsButton>
      </Timeline>
    </Page>
  );
}

export default App;
